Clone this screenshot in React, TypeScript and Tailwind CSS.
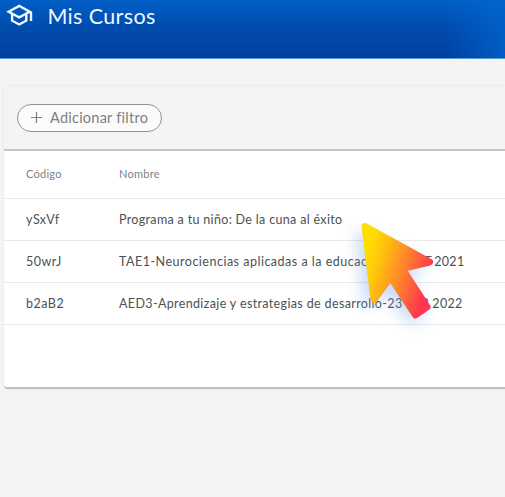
type Course = { code: string; head: string; headClass: string; middle: string; middleClass: string; year: string };

const courses: Course[] = [
  { code: 'ySxVf', head: 'Programa a tu niño: De la cuna al éxito', headClass: 'tracking-[0.33px]', middle: '', middleClass: '', year: '' },
  {
    code: '50wrJ',
    head: 'TAE1-Neurociencias aplicadas a la educac',
    headClass: 'tracking-[0.5px]',
    middle: 'ión-15 OCT ',
    middleClass: 'tracking-[-0.1px]',
    year: '2021',
  },
  {
    code: 'b2aB2',
    head: 'AED3-Aprendizaje y estrategias de desarrollo-23',
    headClass: 'tracking-[0.36px]',
    middle: ' FEB ',
    middleClass: 'tracking-[0.2px]',
    year: '2022',
  },
];

function Header() {
  return (
    <header className="relative h-[59px] border-b border-[#5d9bd5] bg-linear-to-b from-[#005fc6] via-[#004daf] via-45% to-[#00409f]">
      <div className="absolute inset-y-0 right-0 w-[60px] bg-linear-to-r from-transparent to-[#0068d2]/70" />
      <div className="flex h-[31px] items-center pl-[5px]">
        <svg width="28.4" height="28.4" viewBox="0 0 24 24" fill="#f4faff">
          <path d="M12 3L1 9l4 2.18v6L12 21l7-3.82v-6l2-1.09V17h2V9L12 3zm6.82 6L12 12.72 5.18 9 12 5.28 18.82 9zM17 15.99l-5 2.73-5-2.73v-3.72L12 15l5-2.73v3.72z" />
        </svg>
        <h1 className="ml-[14px] whitespace-nowrap text-[21.5px] leading-[30px] tracking-[0.38px] text-[#eef7ff]">Mis Cursos</h1>
      </div>
    </header>
  );
}

function Pointer() {
  return (
    <svg className="absolute top-[200px] left-[330px]" width="150" height="150" viewBox="330 200 150 150">
      <defs>
        <linearGradient id="flame" gradientUnits="userSpaceOnUse" x1="363" y1="260" x2="432" y2="280">
          <stop offset="0" stopColor="#ffdf00" />
          <stop offset="0.2" stopColor="#ffc70a" />
          <stop offset="0.55" stopColor="#ff882a" />
          <stop offset="0.95" stopColor="#ff364f" />
        </linearGradient>
        <filter id="glow" x="-50%" y="-50%" width="200%" height="200%">
          <feGaussianBlur stdDeviation="8" />
        </filter>
      </defs>
      <path d="M361 223 433 263 407 271 431 307 416 319 390 283 371 304Z" transform="translate(-5 6)" fill="#6e9de8" opacity="0.42" filter="url(#glow)" />
      <path d="M365 226.5 429.5 262 402 268.5 427 307 415.5 315 390.5 277 374 299.5Z" fill="url(#flame)" stroke="url(#flame)" strokeWidth="7" strokeLinejoin="round" />
    </svg>
  );
}

export default function App() {
  return (
    <div className="relative h-[497px] w-[505px] overflow-hidden bg-[#f4f4f4] font-['Lato','Open_Sans',sans-serif]">
      <Header />
      <main className="pt-[27px] pl-1">
        <section className="h-[303px] overflow-hidden rounded-l border-b-2 border-b-[#c2c2c2] bg-white shadow-[0_0_2px_#d8d8d8]">
          <div className="flex h-[65px] items-center border-b-2 border-[#c5c5c5] bg-[#f4f4f4] pl-[13px]">
            <button className="flex h-7 w-[145px] items-center rounded-full border border-[#929292] bg-[#fbfbfb] pl-[13px] text-[#7d7f81]">
              <svg width="11" height="11" viewBox="0 0 11 11" stroke="currentColor" strokeWidth="1.2"><path d="M0 5.5h11M5.5 0v11" /></svg>
              <span className="ml-[8px] whitespace-nowrap pt-px text-[14.5px] tracking-[0.24px]">Adicionar filtro</span>
            </button>
          </div>
          <div className="grid h-12 grid-cols-[93px_1fr] items-center border-b border-[#ececec] pl-[22px] text-[11px] tracking-[0.25px] text-[#808284]">
            <span>Código</span><span>Nombre</span>
          </div>
          {courses.map((course) => (
            <div key={course.code} className="grid h-[42px] grid-cols-[93px_1fr] items-center border-b border-[#e9e9e9] pt-0.5 pl-[22px] text-[12.5px] text-[#4b5154]">
              <span className="tracking-[0.5px]">{course.code}</span>
              <span className="whitespace-pre">
                <span className={course.headClass}>{course.head}</span>
                <span className={course.middleClass}>{course.middle}</span>
                <span className="tracking-[0.3px]">{course.year}</span>
              </span>
            </div>
          ))}
        </section>
      </main>
      <Pointer />
    </div>
  );
}
